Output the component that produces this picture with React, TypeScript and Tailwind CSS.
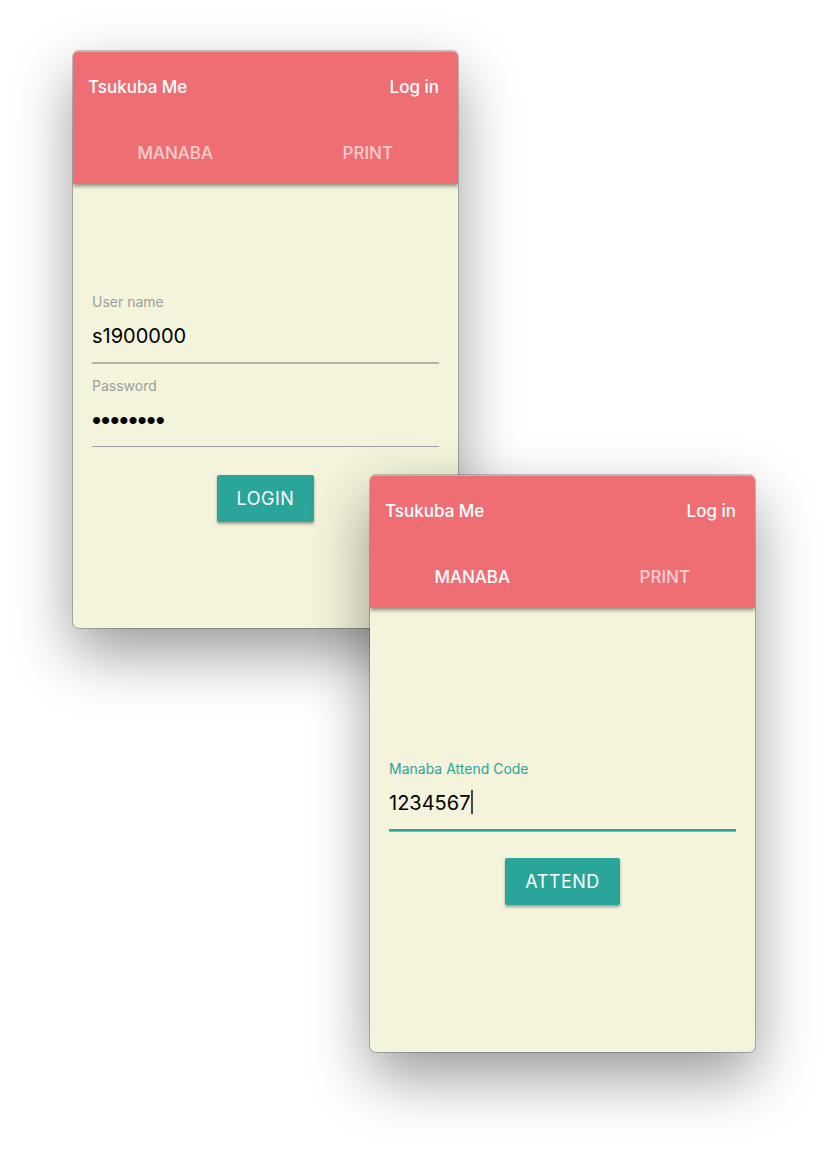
import type { ReactNode } from "react";

function Popup({ active, className = "", children }: { active?: string; className?: string; children: ReactNode }) {
  return (
    <section
      className={`relative flex min-h-[577px] w-full max-w-[385px] flex-col overflow-hidden rounded-md bg-[#f4f4dc] shadow-[0_0_0_1px_rgba(0,0,0,0.22),0_25px_60px_rgba(0,0,0,0.4)] ${className}`}
    >
      <header className="border-t border-[#f3a0a3] bg-[#ee6e73] text-[17px] font-medium text-white shadow-[0_2px_4px_rgba(0,0,0,0.45)]">
        <div className="flex h-[71px] items-center justify-between pr-[19px] pl-[15px]">
          <span>Tsukuba Me</span>
          <a href="#login">Log in</a>
        </div>
        <nav className="grid h-[61px] grid-cols-2">
          {["MANABA", "PRINT"].map((tab) => (
            <button
              key={tab}
              type="button"
              className={`pt-px pl-3 ${tab === active ? "text-white" : "text-white/65"}`}
            >
              {tab}
            </button>
          ))}
        </nav>
      </header>
      {children}
    </section>
  );
}

const inputClass = "block h-[51px] w-full border-b bg-transparent pb-0.5 text-black outline-none";

function SubmitButton({ children }: { children: ReactNode }) {
  return (
    <button
      type="button"
      className="mt-7 h-[47px] self-center rounded-[2px] bg-[#2aa59a] px-5 text-lg tracking-[0.5px] text-white shadow-[0_2px_3px_rgba(0,0,0,0.35)]"
    >
      {children}
    </button>
  );
}

export default function App() {
  return (
    <main className="flex min-h-screen flex-col bg-white px-[73px] pt-[51px] pb-[97px] font-['Inter',sans-serif]">
      <Popup>
        <form className="flex flex-col px-[19px] pt-[108px]">
          <label htmlFor="user" className="text-sm leading-5 text-[#9e9e9e]">
            User name
          </label>
          <input
            id="user"
            type="text"
            defaultValue="s1900000"
            className={`${inputClass} border-[#b0b0a8] text-xl shadow-[0_1px_0_#b0b0a8]`}
          />
          <label htmlFor="password" className="mt-[13px] text-sm leading-5 text-[#9e9e9e]">
            Password
          </label>
          <input
            id="password"
            type="password"
            defaultValue="password"
            className={`${inputClass} border-[#9e9e9e] font-['Liberation_Sans',sans-serif] text-[26px]`}
          />
          <SubmitButton>LOGIN</SubmitButton>
        </form>
      </Popup>
      <Popup active="MANABA" className="-mt-[153px] self-end">
        <form className="flex flex-col px-[19px] pt-[151px]">
          <label htmlFor="code" className="text-sm leading-5 text-[#2aa59a]">
            Manaba Attend Code
          </label>
          <div className="relative">
            <input
              id="code"
              type="text"
              defaultValue="1234567"
              className={`${inputClass} border-[#2aa59a] text-xl shadow-[0_1px_0_#2aa59a,0_2px_0_#6dbfaf]`}
            />
            <span className="absolute top-[11px] left-[82px] h-6 w-0.5 bg-black/70" />
          </div>
          <SubmitButton>ATTEND</SubmitButton>
        </form>
      </Popup>
    </main>
  );
}
